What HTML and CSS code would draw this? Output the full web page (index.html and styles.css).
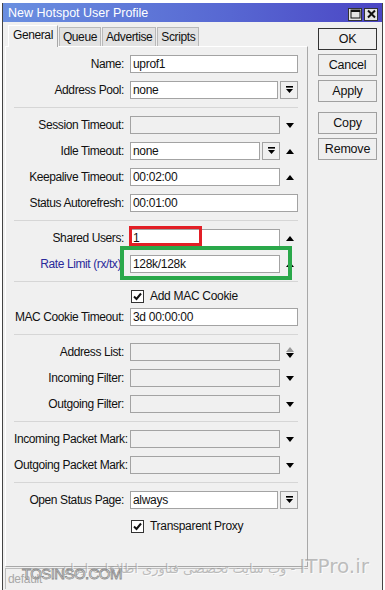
FILE: index.html
```html
<!DOCTYPE html>
<html lang="en">
<head>
  <meta charset="UTF-8" />
  <title>New Hotspot User Profile</title>
  <link rel="stylesheet" href="styles.css">
</head>
<body>

  <div class="window">
    <div class="titlebar">
      <span class="title">New Hotspot User Profile</span>
      <div class="tb-btns">
        <span class="tb-btn">
          <svg width="11" height="10" viewBox="0 0 11 10"><rect x="1" y="1" width="9" height="8" fill="none" stroke="#111" stroke-width="1"/><rect x="1" y="1" width="9" height="2" fill="#111"/></svg>
        </span>
        <span class="tb-btn">
          <svg width="11" height="10" viewBox="0 0 11 10"><path d="M2 1.5 L9 8.5 M9 1.5 L2 8.5" stroke="#111" stroke-width="2"/></svg>
        </span>
      </div>
    </div>

    <div class="body">
      <div class="main">
        <div class="tabs">
          <span class="tab active">General</span>
          <span class="tab">Queue</span>
          <span class="tab">Advertise</span>
          <span class="tab">Scripts</span>
        </div>

        <div class="panel">
          <div class="section">
            <div class="row">
              <span class="lbl">Name:</span>
              <div class="field"><div class="box">uprof1</div></div>
            </div>
            <div class="row">
              <span class="lbl">Address Pool:</span>
              <div class="field"><div class="box">none</div><span class="dd"><svg width="9" height="8"><rect x="1" y="0" width="7" height="1.6"/><path d="M1 3 H8 L4.5 7 Z"/></svg></span></div>
            </div>
          </div>

          <div class="section">
            <div class="row">
              <span class="lbl">Session Timeout:</span>
              <div class="field"><div class="box off"></div><span class="arr"><i class="down"></i></span></div>
            </div>
            <div class="row">
              <span class="lbl">Idle Timeout:</span>
              <div class="field"><div class="box">none</div><span class="dd"><svg width="9" height="8"><rect x="1" y="0" width="7" height="1.6"/><path d="M1 3 H8 L4.5 7 Z"/></svg></span><span class="arr"><i class="up"></i></span></div>
            </div>
            <div class="row">
              <span class="lbl">Keepalive Timeout:</span>
              <div class="field"><div class="box">00:02:00</div><span class="arr"><i class="up"></i></span></div>
            </div>
            <div class="row">
              <span class="lbl">Status Autorefresh:</span>
              <div class="field"><div class="box">00:01:00</div></div>
            </div>
          </div>

          <div class="section">
            <div class="row">
              <span class="lbl">Shared Users:</span>
              <div class="field"><div class="box">1</div><span class="arr"><i class="up"></i></span><span class="mark-red"></span></div>
            </div>
            <div class="row">
              <span class="lbl blue">Rate Limit (rx/tx):</span>
              <div class="field"><div class="box">128k/128k</div><span class="arr"><i class="up"></i></span><span class="mark-green"></span></div>
            </div>
          </div>

          <div class="section s-cookie">
            <div class="row check">
              <span class="lbl"></span>
              <div class="field"><span class="cb"><svg width="11" height="11"><path d="M2 5.5 L4.5 8 L9 2.5" fill="none" stroke="#111" stroke-width="2"/></svg></span>Add MAC Cookie</div>
            </div>
            <div class="row">
              <span class="lbl">MAC Cookie Timeout:</span>
              <div class="field"><div class="box">3d 00:00:00</div></div>
            </div>
          </div>

          <div class="section">
            <div class="row">
              <span class="lbl">Address List:</span>
              <div class="field"><div class="box off"></div><span class="arr"><i class="up gray"></i><i class="down"></i></span></div>
            </div>
            <div class="row">
              <span class="lbl">Incoming Filter:</span>
              <div class="field"><div class="box off"></div><span class="arr"><i class="down"></i></span></div>
            </div>
            <div class="row">
              <span class="lbl">Outgoing Filter:</span>
              <div class="field"><div class="box off"></div><span class="arr"><i class="down"></i></span></div>
            </div>
          </div>

          <div class="section">
            <div class="row">
              <span class="lbl">Incoming Packet Mark:</span>
              <div class="field"><div class="box off"></div><span class="arr"><i class="down"></i></span></div>
            </div>
            <div class="row">
              <span class="lbl">Outgoing Packet Mark:</span>
              <div class="field"><div class="box off"></div><span class="arr"><i class="down"></i></span></div>
            </div>
          </div>

          <div class="section last">
            <div class="row">
              <span class="lbl">Open Status Page:</span>
              <div class="field"><div class="box">always</div><span class="dd"><svg width="9" height="8"><rect x="1" y="0" width="7" height="1.6"/><path d="M1 3 H8 L4.5 7 Z"/></svg></span></div>
            </div>
            <div class="row check">
              <span class="lbl"></span>
              <div class="field"><span class="cb"><svg width="11" height="11"><path d="M2 5.5 L4.5 8 L9 2.5" fill="none" stroke="#111" stroke-width="2"/></svg></span>Transparent Proxy</div>
            </div>
          </div>
        </div>

        <div class="status">default</div>
      </div>

      <div class="side">
        <button class="btn default">OK</button>
        <button class="btn">Cancel</button>
        <button class="btn">Apply</button>
        <button class="btn gap">Copy</button>
        <button class="btn">Remove</button>
      </div>
    </div>
  </div>

  <div class="wm wm-fa" dir="rtl"><span class="wm-site">ITPro.ir</span> - وب سایت تخصصی فناوری اطلاعات ایران</div>
  <div class="wm wm-en">TOSINSO.COM</div>

</body>
</html>
```

FILE: styles.css
```css
body {
  margin: 0;
  background: #fff;
  color: #111;
  font-family: 'Liberation Sans', Arial, sans-serif;
  font-size: 12px;
  letter-spacing: -0.3px;
  position: relative;
  height: 590px;
  overflow: hidden;
}
.window {
  margin: 3px 2px 0 2px;
  height: 590px;
  background: #f0f0f0;
  border-left: 1px solid #444;
  border-right: 1px solid #444;
}
.titlebar {
  height: 19px;
  display: flex;
  align-items: center;
  justify-content: space-between;
  padding: 0 4px 0 5px;
  background: linear-gradient(to right, #6a8fe0, #5767d2 60%, #4b46c4);
  color: #fff;
}
.title {
  font-size: 12.5px;
  letter-spacing: 0;
}
.tb-btns {
  display: flex;
  gap: 2px;
  margin-top: 3px;
}
.tb-btn {
  width: 12px;
  height: 11px;
  display: flex;
  align-items: center;
  justify-content: center;
  background: #e4e4e4;
  border: 1px solid #333;
}
.body {
  display: flex;
}
.main {
  width: 303px;
  padding: 3px 0 0 2px;
}
.tabs {
  display: flex;
  align-items: flex-end;
  height: 21px;
  padding-left: 3px;
}
.tab {
  height: 18px;
  line-height: 19px;
  padding: 0 3px;
  background: #e2e2e2;
  border: 1px solid #b9b9b9;
  border-bottom: none;
  margin-right: 1px;
  letter-spacing: -0.4px;
}
.tab.active {
  height: 21px;
  line-height: 19px;
  padding: 0 4px;
  background: #f0f0f0;
  border-color: #fff #a8a8a8 #f0f0f0 #fff;
  margin-bottom: -1px;
  position: relative;
  z-index: 1;
}
.panel {
  height: 519px;
  border: 1px solid;
  border-color: #fff #a8a8a8 #a8a8a8 #fff;
  background: #f0f0f0;
}
.section {
  margin: 0 9px 0 8px;
  padding: 8px 0;
  display: grid;
  row-gap: 8px;
  border-bottom: 1px solid #d6d6d6;
}
.section.s-cookie {
  padding-top: 7px;
  row-gap: 6px;
}
.section.last {
  border-bottom: none;
  row-gap: 10px;
}
.row {
  display: grid;
  grid-template-columns: 110px 168px;
  column-gap: 6px;
  height: 18px;
  align-items: center;
}
.row.check {
  height: 13px;
}
.lbl {
  text-align: right;
  white-space: nowrap;
  letter-spacing: -0.4px;
}
.lbl.blue {
  color: #2a2a9a;
}
.field {
  display: flex;
  align-items: center;
  gap: 2px;
  height: 100%;
  position: relative;
}
.box {
  flex: 1;
  height: 16px;
  line-height: 16px;
  padding-left: 2px;
  background: #fff;
  border: 1px solid #a3a3a3;
  white-space: nowrap;
  overflow: hidden;
}
.box.off {
  background: #f0f0f0;
}
.dd {
  width: 16px;
  height: 16px;
  display: flex;
  align-items: center;
  justify-content: center;
  border: 1px solid #a3a3a3;
  background: #f0f0f0;
}
.arr {
  width: 16px;
  display: flex;
  flex-direction: column;
  align-items: center;
  justify-content: center;
  gap: 1px;
}
.up {
  border-left: 4.5px solid transparent;
  border-right: 4.5px solid transparent;
  border-bottom: 5px solid #000;
}
.up.gray {
  border-bottom-color: #999;
}
.down {
  border-left: 4.5px solid transparent;
  border-right: 4.5px solid transparent;
  border-top: 5px solid #000;
}
.cb {
  width: 11px;
  height: 11px;
  margin: 0 4px 0 1px;
  border: 1px solid #333;
  background: #fff;
  display: flex;
}
.mark-red {
  position: absolute;
  left: -1px;
  top: -3px;
  width: 67px;
  height: 14px;
  border: 3px solid #e21f26;
}
.mark-green {
  position: absolute;
  left: -10px;
  top: -9px;
  width: 164px;
  height: 26px;
  border: 4px solid #2aa84a;
}
.status {
  height: 20px;
  line-height: 20px;
  margin-top: 1px;
  padding-left: 2px;
  color: #a8a8a8;
  border-top: 1px solid #bdbdbd;
  border-left: 1px solid #bdbdbd;
}
.side {
  display: flex;
  flex-direction: column;
  gap: 4px;
  margin: 6px 0 0 10px;
}
.btn {
  width: 59px;
  height: 22px;
  padding: 0;
  font-family: inherit;
  font-size: 12.5px;
  letter-spacing: -0.2px;
  color: #111;
  background: #efefef;
  border: 1px solid #a0a0a0;
}
.btn.default {
  border: 1px solid #333;
}
.btn.gap {
  margin-top: 6px;
}
.wm {
  position: absolute;
  white-space: nowrap;
  pointer-events: none;
  letter-spacing: 0;
}
.wm-fa {
  right: 16px;
  top: 554px;
  font-family: 'DejaVu Sans', sans-serif;
  font-size: 13px;
  color: rgba(150, 150, 150, 0.6);
  text-shadow: 1px 1px 0 rgba(255, 255, 255, 0.7);
}
.wm-site {
  font-size: 20px;
}
.wm-en {
  left: 22px;
  top: 565px;
  font-size: 15px;
  letter-spacing: -0.6px;
  color: rgba(255, 255, 255, 0.8);
  -webkit-text-stroke: 0.8px #8a8a8a;
}
```
